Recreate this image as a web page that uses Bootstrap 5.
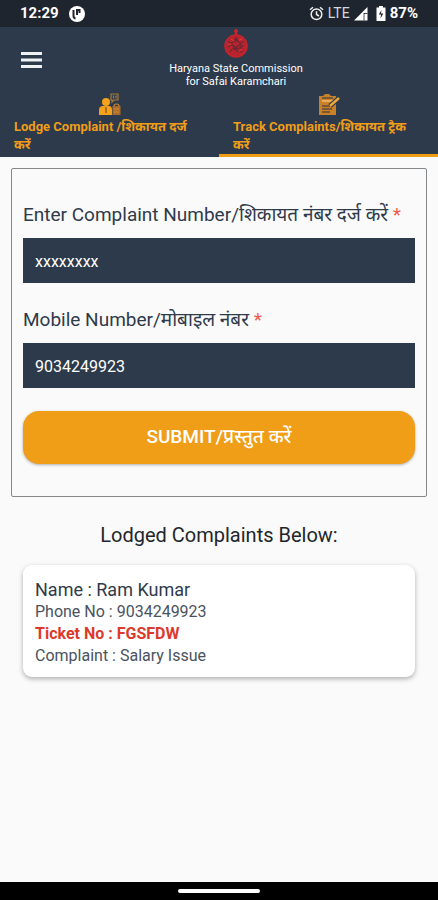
<!DOCTYPE html>
<html lang="en">
<head>
<meta charset="utf-8">
<meta name="viewport" content="width=device-width, initial-scale=1">
<title>Haryana State Commission for Safai Karamchari</title>
<link href="https://cdn.jsdelivr.net/npm/bootstrap@5.3.0/dist/css/bootstrap.min.css" rel="stylesheet">
<style>
:root { --navy: #2c3a4b; --orange: #f09d18; --ink: #2f3a4a; }
body { font-family: Roboto, "Noto Sans", sans-serif; background: #fafafa; color: var(--ink); }
.status-bar { background: #1e252f; height: 27px; font-size: 15px; line-height: 27px; padding: 0 20px; }
.status-bar .network { font-size: 14px; color: #d5d8dc; }
.app-header { background: var(--navy); height: 65px; }
.menu-btn { padding: 8px; border: 0; background: none; line-height: 0; }
.brand-name { font-size: 11px; line-height: 13px; padding-left: 34px; padding-bottom: 5px; }
.tab-strip { background: var(--navy); height: 65px; }
.tab-strip .nav-link { color: var(--orange); font-size: 13px; line-height: 18px; font-weight: 700; padding: 1px 20px 0 14px; border-radius: 0; border-bottom: 3px solid transparent; height: 65px; }
.tab-strip .nav-link.active { border-bottom-color: var(--orange); }
.tab-strip svg { display: block; margin: 0 auto 2px; }
.tab-icon { padding-left: 6px; }
.form-frame { border: 1px solid #85888b; border-radius: 2px; margin: 11px 11px 0; padding: 34px 11px 32px; }
.field-label { font-size: 19px; line-height: 24px; margin-bottom: 11px; }
.field-input, .field-input:focus { background: var(--navy); color: #fff; border: 0; border-radius: 0; height: 45px; padding: 2px 12px 0; font-size: 16px; margin-bottom: 25px; }
.required { color: #ee5a50; }
.submit-btn, .submit-btn:hover { background: var(--orange); color: #fff; border: 0; border-radius: 16px; height: 53px; font-size: 19px; font-weight: 500; box-shadow: 0 1px 3px rgba(0,0,0,.3); }
.field-input.last { margin-bottom: 23px; }
.list-title { font-size: 20px; line-height: 24px; margin: 26px 0 18px; font-weight: 400; color: #22262b; }
.ticket { background: #fff; border: 0; border-radius: 9px; margin: 0 23px; padding: 13px 12px 10px; font-size: 16px; line-height: 22px; box-shadow: 0 2px 5px rgba(0,0,0,.3); color: #4a5260; }
.ticket .person { font-size: 18px; line-height: 23px; color: var(--ink); }
.ticket .number { color: #dc3a2c; }
.gesture-bar { background: #000; height: 18px; }
.gesture-bar span { width: 82px; height: 4px; border-radius: 2px; background: #fff; }
</style>
</head>
<body class="min-vh-100 d-flex flex-column">
<div class="status-bar d-flex align-items-center justify-content-between text-white">
  <div class="d-flex align-items-center fw-bold">
    <span>12:29</span>
    <svg class="ms-1" width="24" height="18" viewBox="2 0 24 18" aria-hidden="true"><circle cx="16" cy="9" r="8" fill="#fff"/><path d="M12.500 5v6q0 2 2 2.500M16 10V5h2.500v3" fill="none" stroke="#1e252f" stroke-width="2"/></svg>
  </div>
  <div class="d-flex align-items-center">
    <svg width="15" height="15" viewBox="0 0 15 15" fill="none" stroke="#eee" stroke-width="1.500" aria-hidden="true"><circle cx="7.500" cy="8.300" r="5.300"/><path d="M7.500 5.200v3.300l2.500 1.500M1 3.800L4 1.200M14 3.800L11 1.200"/></svg>
    <span class="network ms-1">LTE</span>
    <svg class="ms-1" width="14" height="14" viewBox="0 0 14 14" aria-hidden="true"><path d="M0 13.500L13.500 0v13.500z" fill="#fff"/><path d="M10 6v7.500M10 6.500h3.500" stroke="#1e252f" stroke-width=".8"/></svg>
    <svg class="ms-2 me-1" width="10" height="15" viewBox="0 0 10 15" aria-hidden="true"><path d="M3 0h4v1.500h2.500V15h-9V1.500H3z" fill="#fff"/><path d="M5.500 4L2.800 8.500H5L4.500 12.500 7.300 7.500H5z" fill="#1e252f"/></svg>
    <span class="fw-bold">87%</span>
  </div>
</div>

<header class="app-header d-grid align-items-center px-2 text-white">
  <div class="row g-0 align-items-center">
    <div class="col-3 ps-1">
      <button class="menu-btn" type="button" aria-label="Menu"><svg width="23" height="18" viewBox="0 0 23 18" fill="#eef1f6" aria-hidden="true"><path d="M1 1h21v3H1zM1 7.500h21v3H1zM1 14h21v3H1z"/></svg></button>
    </div>
    <div class="col-6 text-center brand-name">
      <svg class="d-block mx-auto mb-1" width="26" height="31" viewBox="0 0 26 31" fill="none" stroke="#c3242d" aria-hidden="true"><path d="M13 2v7M11 4h4M11.500 6.500h3" stroke-width="2"/><circle cx="13" cy="19" r="11" fill="#b9232d" stroke-width="1.500"/><path d="M5 14q4 5 8-3q4 8 8 3M5 20q4-4 7 0t8-2M7 25q2-5 6-2t6 1M13 10v5M9 17l3 5 5-5 2 5" stroke="#6d2735" stroke-width="1.200"/><path d="M8 12l3 2M16 13l3-1M5 18l3-1M16 25l3-3" stroke="#e13d3f"/></svg>
      <div class="text-nowrap">Haryana State Commission<br>for Safai Karamchari</div>
    </div>
  </div>
</header>

<nav class="tab-strip nav flex-nowrap" aria-label="Complaints">
  <a class="nav-link w-50" href="#lodge">
    <div class="tab-icon"><svg width="24" height="23" viewBox="0 0 24 23" aria-hidden="true"><circle cx="8" cy="9" r="4" fill="#f5a11b"/><path d="M1 22v-5q0-4 4-4h6q3 0 3 4v5z" fill="#f5a11b"/><path d="M8 14v6" stroke="#8d6526" stroke-width="1.500"/><path d="M13 1h7v6h-4l-2 2V7h-1zM15.500 2.500V5.500M18 2.500V5.500" fill="none" stroke="#aa7b36" stroke-width="1.200"/><path d="M14.500 13h8v9h-8z" fill="#a96c2c"/><path d="M16 13q0-2 2.500-2t2.500 2M16 16h5M16 19h5" fill="none" stroke="#d18b35" stroke-width="1.200"/></svg></div>
    Lodge Complaint /शिकायत दर्ज करें
  </a>
  <a class="nav-link active w-50" href="#track" aria-current="page">
    <div class="tab-icon"><svg width="24" height="23" viewBox="0 0 24 23" aria-hidden="true"><path d="M2 3h4l2-2h4l2 2h5v19H2z" fill="#c98128"/><path d="M5 5h11M5 13h8M5 16h10M5 19h8" stroke="#614b36" stroke-width="1.500"/><path d="M5 8h11" stroke="#f5bd65" stroke-width="1.500"/><path d="M13 13L22 5" stroke="#2c3a4b" stroke-width="5"/><path d="M13 13L22 5" stroke="#eba63e" stroke-width="2.500"/></svg></div>
    Track Complaints/शिकायत ट्रैक करें
  </a>
</nav>

<main class="flex-grow-1">
  <form class="form-frame">
    <label class="field-label d-block" for="complaint">Enter Complaint Number/शिकायत नंबर दर्ज करें <span class="required">*</span></label>
    <input class="form-control field-input" id="complaint" type="text" value="xxxxxxxx">
    <label class="field-label d-block" for="mobile">Mobile Number/मोबाइल नंबर <span class="required">*</span></label>
    <input class="form-control field-input last" id="mobile" type="tel" value="9034249923">
    <button class="btn submit-btn w-100" type="button">SUBMIT/प्रस्तुत करें</button>
  </form>
  <h1 class="list-title text-center">Lodged Complaints Below:</h1>
  <article class="card ticket">
    <div class="person">Name : Ram Kumar</div>
    <div>Phone No : 9034249923</div>
    <div class="number fw-bold">Ticket No : FGSFDW</div>
    <div>Complaint : Salary Issue</div>
  </article>
</main>
<footer class="gesture-bar d-flex align-items-center justify-content-center"><span></span></footer>
<script src="https://cdn.jsdelivr.net/npm/bootstrap@5.3.0/dist/js/bootstrap.bundle.min.js"></script>
</body>
</html>
